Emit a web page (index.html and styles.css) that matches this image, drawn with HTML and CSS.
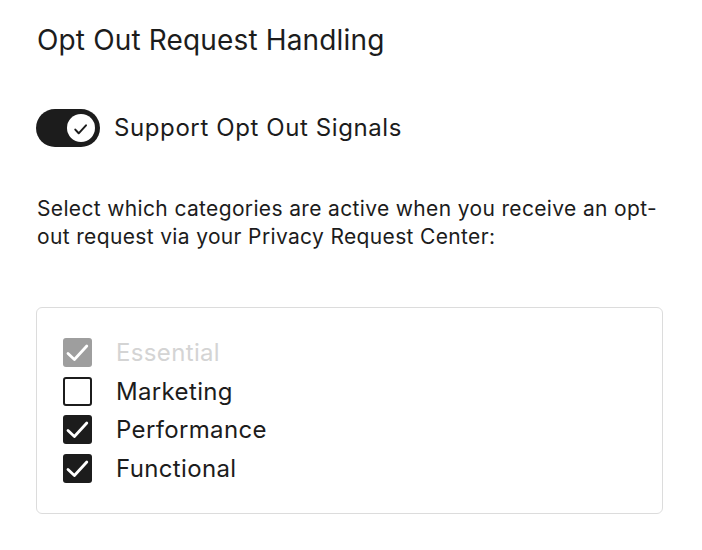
FILE: index.html
```html
<!DOCTYPE html>
<html lang="en">
<head>
<meta charset="utf-8">
<title>Opt Out Request Handling</title>
<link rel="stylesheet" href="styles.css">
</head>
<body>
<main class="page">
  <h1 class="title">Opt Out Request Handling</h1>
  <div class="toggle-row">
    <span class="toggle" role="switch" aria-checked="true">
      <span class="knob">
        <svg viewBox="0 0 28 28" width="28" height="28"><path d="M8.3 15.6 L11.7 19.3 L19 11.3" fill="none" stroke="#1c1c1c" stroke-width="2" stroke-linecap="round" stroke-linejoin="round"/></svg>
      </span>
    </span>
    <span class="toggle-label">Support Opt Out Signals</span>
  </div>
  <p class="desc">Select which categories are active when you receive an opt-out request via your Privacy Request Center:</p>
  <div class="box">
    <label class="row disabled">
      <span class="check checked">
        <svg viewBox="0 0 29 29" width="29" height="29"><path d="M5 15.5 L11.4 21.5 L23.8 8" fill="none" stroke="#fff" stroke-width="2.8" stroke-linecap="round" stroke-linejoin="round"/></svg>
      </span>
      <span class="label">Essential</span>
    </label>
    <label class="row">
      <span class="check"></span>
      <span class="label">Marketing</span>
    </label>
    <label class="row">
      <span class="check checked">
        <svg viewBox="0 0 29 29" width="29" height="29"><path d="M5 15.5 L11.4 21.5 L23.8 8" fill="none" stroke="#fff" stroke-width="2.8" stroke-linecap="round" stroke-linejoin="round"/></svg>
      </span>
      <span class="label">Performance</span>
    </label>
    <label class="row">
      <span class="check checked">
        <svg viewBox="0 0 29 29" width="29" height="29"><path d="M5 15.5 L11.4 21.5 L23.8 8" fill="none" stroke="#fff" stroke-width="2.8" stroke-linecap="round" stroke-linejoin="round"/></svg>
      </span>
      <span class="label">Functional</span>
    </label>
  </div>
</main>
</body>
</html>
```
FILE: styles.css
```css
html, body {
  margin: 0;
  padding: 0;
  background: #ffffff;
}

.page {
  padding: 20px 0 0 36px;
  width: 628px;
  font-family: Inter, "DejaVu Sans", sans-serif;
  color: #1c1c1c;
}

.title {
  margin: 0;
  padding-left: 1px;
  font-size: 28px;
  font-weight: 400;
  line-height: 40px;
  letter-spacing: 0.15px;
}

.toggle-row {
  display: flex;
  align-items: center;
  gap: 14px;
  margin-top: 49px;
}

.toggle {
  width: 64px;
  height: 38px;
  border-radius: 19px;
  background: #1c1c1c;
  display: flex;
  align-items: center;
  justify-content: flex-end;
  padding-right: 5px;
  box-sizing: border-box;
}

.knob {
  width: 28px;
  height: 28px;
  border-radius: 50%;
  background: #ffffff;
  display: flex;
}

.toggle-label {
  font-size: 24px;
  line-height: 38px;
  letter-spacing: 0.6px;
}

.desc {
  margin: 48px 0 0;
  padding-left: 1px;
  font-size: 21px;
  line-height: 28px;
  letter-spacing: 0.35px;
  width: 628px;
}

.box {
  margin-top: 56px;
  width: 627px;
  box-sizing: border-box;
  border: 1px solid #dcdcdc;
  border-radius: 6px;
  padding: 30px 26px 30px 26px;
  display: flex;
  flex-direction: column;
  gap: 9.5px;
}

.row {
  display: flex;
  align-items: center;
  gap: 24px;
  height: 29px;
}

.check {
  width: 29px;
  height: 29px;
  box-sizing: border-box;
  border: 2.5px solid #1c1c1c;
  border-radius: 3px;
  display: flex;
  flex: none;
}

.check.checked {
  border: none;
  background: #1c1c1c;
}

.disabled .check.checked {
  background: #9e9e9e;
}

.label {
  font-size: 24px;
  line-height: 29px;
  letter-spacing: 0.35px;
}

.disabled .label {
  color: #d4d4d4;
}
```
